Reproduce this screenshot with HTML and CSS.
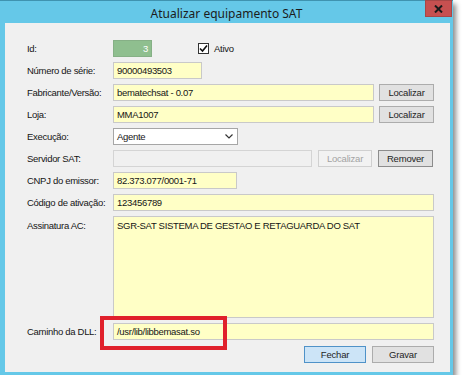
FILE: index.html
```html
<!DOCTYPE html>
<html>
<head>
  <meta charset="utf-8">
  <link rel="stylesheet" href="styles.css">
</head>
<body>
  <div class="window">
    <div class="titlebar">
      <span class="title">Atualizar equipamento SAT</span>
      <div class="close-btn">
        <svg width="9" height="8" viewBox="0 0 9 8"><path d="M1 0.5 L8 7.5 M8 0.5 L1 7.5" stroke="#1a1a1a" stroke-width="2"/></svg>
      </div>
    </div>

    <div class="client">
      <div class="form">
        <label class="lbl">Id:</label>
        <div class="ctl">
          <div class="field field-id">3</div>
          <div class="check">
            <span class="check-box">
              <svg width="9" height="9" viewBox="0 0 9 9"><path d="M1 4.5 L3.5 7 L8 1.5" fill="none" stroke="#111" stroke-width="1.6"/></svg>
            </span>
            <span>Ativo</span>
          </div>
        </div>

        <label class="lbl">Número de série:</label>
        <div class="ctl"><div class="field field-yellow w-serie">90000493503</div></div>

        <label class="lbl">Fabricante/Versão:</label>
        <div class="ctl">
          <div class="field field-yellow grow">bematechsat - 0.07</div>
          <button class="btn">Localizar</button>
        </div>

        <label class="lbl">Loja:</label>
        <div class="ctl">
          <div class="field field-yellow grow">MMA1007</div>
          <button class="btn">Localizar</button>
        </div>

        <label class="lbl">Execução:</label>
        <div class="ctl">
          <div class="field select">
            <span>Agente</span>
            <svg width="8" height="5" viewBox="0 0 8 5"><path d="M0.5 0.5 L4 4 L7.5 0.5" fill="none" stroke="#333" stroke-width="1.2"/></svg>
          </div>
        </div>

        <label class="lbl">Servidor SAT:</label>
        <div class="ctl">
          <div class="field field-disabled w-server"></div>
          <button class="btn btn-disabled">Localizar</button>
          <button class="btn btn-remove">Remover</button>
        </div>

        <label class="lbl">CNPJ do emissor:</label>
        <div class="ctl"><div class="field field-yellow w-cnpj">82.373.077/0001-71</div></div>

        <label class="lbl">Código de ativação:</label>
        <div class="ctl"><div class="field field-yellow grow">123456789</div></div>

        <label class="lbl lbl-top">Assinatura AC:</label>
        <div class="ctl ctl-top"><div class="field field-yellow area grow">SGR-SAT SISTEMA DE GESTAO E RETAGUARDA DO SAT</div></div>

        <label class="lbl">Caminho da DLL:</label>
        <div class="ctl dll">
          <div class="field field-yellow grow">/usr/lib/libbemasat.so</div>
          <div class="highlight"></div>
        </div>

        <div class="actions">
          <button class="btn btn-primary">Fechar</button>
          <button class="btn">Gravar</button>
        </div>
      </div>
    </div>
  </div>
</body>
</html>
```

FILE: styles.css
```css
body {
  margin: 0;
  background: #ffffff;
  font-family: "Liberation Sans", Arial, sans-serif;
}

.window {
  width: 453px;
  height: 375px;
  box-sizing: border-box;
  background: #65c8e8;
  border-top: 1px solid #3f93b0;
  box-shadow: 3px 4px 5px rgba(0, 0, 0, 0.45);
  display: flex;
  flex-direction: column;
}

.titlebar {
  height: 22px;
  position: relative;
  display: flex;
  align-items: center;
  justify-content: center;
}

.title {
  font-family: "Noto Sans", sans-serif;
  font-size: 12px;
  color: #1c1c1c;
  margin-top: 2px;
}

.close-btn {
  position: absolute;
  right: 1px;
  top: -1px;
  width: 27px;
  height: 17px;
  background: #c75050;
  border: 1px solid #a84646;
  box-sizing: border-box;
  display: flex;
  align-items: center;
  justify-content: center;
}

.client {
  flex: 1;
  margin: 0 3px 3px 5px;
  background: #f0f0f0;
  padding: 17px 16px 0 22px;
}

.form {
  display: grid;
  grid-template-columns: 86px 1fr;
  grid-template-rows: repeat(8, 17px) 102px 17px 17px;
  row-gap: 5px;
  font-size: 9.5px;
  letter-spacing: -0.3px;
  color: #151515;
}

.lbl {
  display: flex;
  align-items: center;
  white-space: nowrap;
}

.lbl-top {
  align-items: flex-start;
  padding-top: 4px;
}

.ctl {
  display: flex;
  align-items: center;
  gap: 5px;
}

.ctl-top {
  align-items: stretch;
}

.field {
  height: 17px;
  box-sizing: border-box;
  border: 1px solid #c9c9c9;
  padding: 0 3px;
  display: flex;
  align-items: center;
  white-space: nowrap;
}

.grow {
  flex: 1;
}

.field-yellow {
  background: #ffffc6;
}

.field-id {
  width: 39px;
  background: #8fbf8f;
  border-color: #86b086;
  color: #ffffff;
  justify-content: flex-end;
}

.w-serie {
  width: 89px;
}

.w-cnpj {
  width: 124px;
}

.w-server {
  width: 199px;
  background: #f0f0f0;
  border-color: #d4d4d4;
  margin-right: 1px;
}

.select {
  width: 125px;
  background: #ffffff;
  border-color: #a6a6a6;
  justify-content: space-between;
  padding-right: 4px;
}

.area {
  height: 102px;
  align-items: flex-start;
  padding-top: 3px;
}

.check {
  display: flex;
  align-items: center;
  gap: 5px;
  margin-left: 41px;
}

.check-box {
  width: 11px;
  height: 11px;
  box-sizing: border-box;
  border: 1px solid #333333;
  background: #ffffff;
  display: flex;
  align-items: center;
  justify-content: center;
}

.btn {
  width: 55px;
  height: 17px;
  box-sizing: border-box;
  border: 1px solid #acacac;
  background: #e1e1e1;
  font-family: "Liberation Sans", Arial, sans-serif;
  font-size: 9.5px;
  letter-spacing: -0.2px;
  color: #1e1e1e;
  padding: 0;
}

.btn-disabled {
  width: 54px;
  background: #f2f2f2;
  border-color: #d0d0d0;
  color: #a3a3a3;
  margin-right: 1px;
}

.btn-remove {
  border-color: #8c8c8c;
}

.btn-primary {
  background: #cce4f7;
  border-color: #4f92c8;
}

.dll {
  position: relative;
}

.highlight {
  position: absolute;
  left: -13px;
  top: -7px;
  width: 127px;
  height: 34px;
  box-sizing: border-box;
  border: 4px solid #e0202b;
}

.actions {
  grid-column: 1 / -1;
  display: flex;
  justify-content: flex-end;
  gap: 6px;
  margin-top: 1px;
}

.actions .btn {
  width: 62px;
}
```
